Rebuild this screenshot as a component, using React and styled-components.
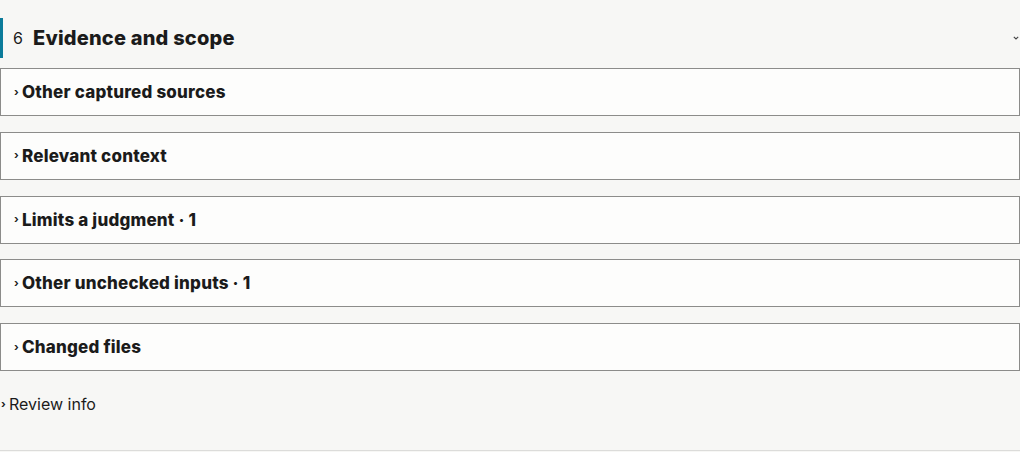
import React from "react";
import styled, { createGlobalStyle } from "styled-components";

const Global = createGlobalStyle`
  html, body { margin: 0; padding: 0; background: #f7f7f5; }
  body { font-family: Inter, "Liberation Sans", sans-serif; color: #1b1b1b; }
`;

const Page = styled.div`
  width: 1020px;
  height: 451px;
  box-sizing: border-box;
  border-bottom: 1px solid #dcdcda;
  padding-top: 18px;
`;

const Header = styled.div`
  display: flex;
  align-items: center;
  height: 40px;
  border-left: 3px solid #0b7b9a;
  padding-left: 10px;
  padding-right: 1px;
`;

const Num = styled.span`
  font-size: 16px;
  width: 20px;
`;

const Title = styled.h2`
  margin: 0;
  font-size: 20px;
  font-weight: 800;
  letter-spacing: 0.2px;
  flex: 1;
`;

const List = styled.div`
  display: flex;
  flex-direction: column;
  gap: 15.8px;
  margin-top: 10px;
`;

const Box = styled.div`
  height: 48px;
  box-sizing: border-box;
  border: 1px solid #8c8c8a;
  background: #fdfdfc;
  display: flex;
  align-items: center;
  padding-left: 13px;
`;

const Chev = styled.span`
  font-size: 11px;
  font-weight: 700;
  width: 8px;
  line-height: 1;
  display: inline-block;
`;

const Label = styled.span`
  font-size: 17px;
  font-weight: 800;
  letter-spacing: 0.2px;
`;

const Footer = styled.div`
  display: flex;
  align-items: center;
  height: 20px;
  margin-top: 23px;
  padding-left: 1px;
  font-size: 16px;
`;

const DownChev = () => (
  <svg width="6" height="4" viewBox="0 0 6 4">
    <path d="M0.8 0.8 L3 3 L5.2 0.8" fill="none" stroke="#444" strokeWidth="1.1" />
  </svg>
);

const items = [
  "Other captured sources",
  "Relevant context",
  "Limits a judgment · 1",
  "Other unchecked inputs · 1",
  "Changed files",
];

export default function App() {
  return (
    <>
      <Global />
      <Page>
        <Header>
          <Num>6</Num>
          <Title>Evidence and scope</Title>
          <DownChev />
        </Header>
        <List>
          {items.map((t) => (
            <Box key={t}>
              <Chev>›</Chev>
              <Label>{t}</Label>
            </Box>
          ))}
        </List>
        <Footer>
          <Chev>›</Chev>
          <span>Review info</span>
        </Footer>
      </Page>
    </>
  );
}
